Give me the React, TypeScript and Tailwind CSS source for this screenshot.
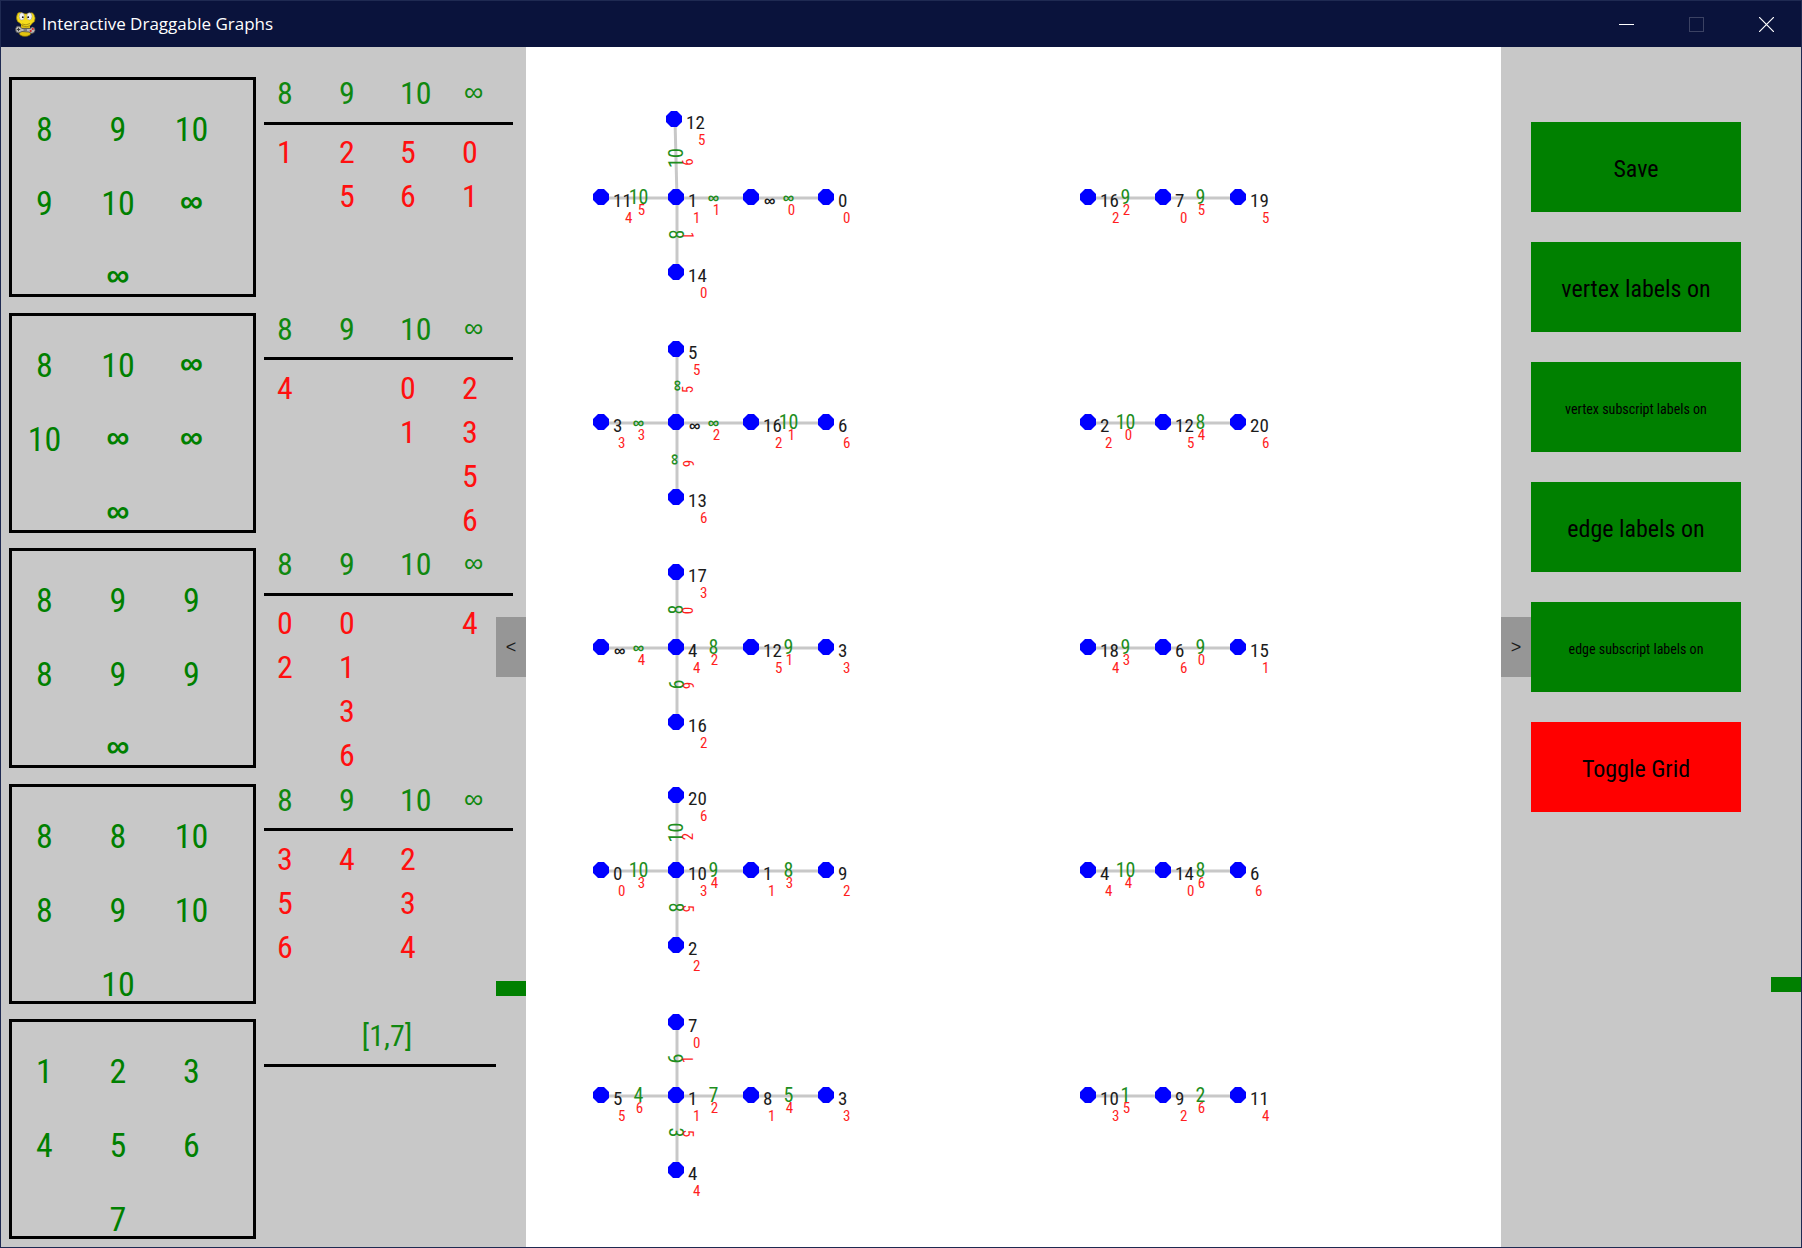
import { Fragment } from "react";

const INF = "∞";

/* ---------- Title bar ---------- */

function SnakeIcon() {
  return (
    <svg width="24" height="26" viewBox="0 0 24 26" aria-hidden="true" className="shrink-0">
      <ellipse cx="11" cy="22" rx="6" ry="3.4" fill="#e3c40f" stroke="#6b5c08" strokeWidth="0.7" />
      <path d="M7 14h9v7H7z" fill="#d8bb14" />
      <path
        d="M3.500 2.500Q6 .2 8.500 2.200Q12 3.600 15.500 2.200Q18.500 .6 20 3.500Q22 7 20.500 10.500Q18 12 16.500 14.500Q12 17 8 14.500Q6.500 12 3.500 10.500Q1.500 7 3.500 2.500Z"
        fill="#f5dc1c"
        stroke="#8a7608"
        strokeWidth="0.7"
      />
      <ellipse cx="7.800" cy="5.400" rx="2.600" ry="3.600" fill="#f4f4f4" stroke="#8a8a8a" strokeWidth="0.5" />
      <ellipse cx="15.400" cy="5.400" rx="2.600" ry="3.600" fill="#f4f4f4" stroke="#8a8a8a" strokeWidth="0.5" />
      <circle cx="8.800" cy="6.200" r="0.900" fill="#111" />
      <circle cx="14.200" cy="6.200" r="0.900" fill="#111" />
      <path d="M8 13Q12 15 16 12.500" fill="none" stroke="#8a7608" strokeWidth="0.7" />
      <path
        d="M3 15.200Q6 14.500 8 17.500L16 17.500Q18.500 15 20.500 17Q22 20 19.500 22Q17 23.200 15 21L8 20.500Q4.500 23 2.200 21Q.5 17.500 3 15.200Z"
        fill="#b9b9b9"
        stroke="#4a4a4a"
        strokeWidth="0.8"
      />
      <path d="M4.500 16.800v3.400M2.800 18.500h3.400" stroke="#333" strokeWidth="0.9" />
      <circle cx="18.800" cy="18" r="1.100" fill="#d42020" />
      <circle cx="16.700" cy="20" r="1.100" fill="#d42020" />
      <path d="M9.500 19h3.500" stroke="#333" strokeWidth="0.9" />
    </svg>
  );
}

function TitleBar() {
  return (
    <header className="flex h-[46px] shrink-0 items-stretch bg-[#0a133c] text-white">
      <div className="flex flex-1 items-center gap-1 pl-[13px]">
        <SnakeIcon />
        <h1 className="font-['Open_Sans','Noto_Sans',sans-serif] text-[17px] leading-6">
          Interactive Draggable Graphs
        </h1>
      </div>
      <button type="button" aria-label="Minimize" className="flex w-[69px] items-center justify-center">
        <svg width="15" height="15" viewBox="0 0 15 15">
          <path d="M0 7.500h15" stroke="#fff" strokeWidth="1" />
        </svg>
      </button>
      <button type="button" aria-label="Maximize" disabled className="flex w-[70px] items-center justify-center">
        <svg width="15" height="15" viewBox="0 0 15 15">
          <rect x="0.5" y="0.5" width="14" height="14" fill="none" stroke="#3b4263" />
        </svg>
      </button>
      <button type="button" aria-label="Close" className="flex w-[70px] items-center justify-center">
        <svg width="15" height="15" viewBox="0 0 15 15">
          <path d="M0 0L15 15M15 0L0 15" stroke="#fff" strokeWidth="1.200" />
        </svg>
      </button>
    </header>
  );
}

/* ---------- Left panel ---------- */

type LabelSet = {
  box: string[];
  head: string[];
  rows: string[][];
};

const LABEL_SETS: LabelSet[] = [
  {
    box: ["8", "9", "10", "9", "10", INF, "", INF],
    head: ["8", "9", "10", INF],
    rows: [
      ["1", "2", "5", "0"],
      ["", "5", "6", "1"],
    ],
  },
  {
    box: ["8", "10", INF, "10", INF, INF, "", INF],
    head: ["8", "9", "10", INF],
    rows: [
      ["4", "", "0", "2"],
      ["", "", "1", "3"],
      ["", "", "", "5"],
      ["", "", "", "6"],
    ],
  },
  {
    box: ["8", "9", "9", "8", "9", "9", "", INF],
    head: ["8", "9", "10", INF],
    rows: [
      ["0", "0", "", "4"],
      ["2", "1", "", ""],
      ["", "3", "", ""],
      ["", "6", "", ""],
    ],
  },
  {
    box: ["8", "8", "10", "8", "9", "10", "", "10"],
    head: ["8", "9", "10", INF],
    rows: [
      ["3", "4", "2", ""],
      ["5", "", "3", ""],
      ["6", "", "4", ""],
    ],
  },
  { box: ["1", "2", "3", "4", "5", "6", "", "7"], head: [], rows: [] },
];

function LabelBox({ cells }: { cells: string[] }) {
  return (
    <div className="grid h-[220px] w-[247px] shrink-0 grid-cols-[65px_82px_65px] content-start gap-y-[38px] border-3 border-black pt-[31px] text-center text-[34px] leading-9 text-[#008000]">
      {cells.map((c, i) =>
        c === INF ? (
          <span key={i} className="h-9 font-['Liberation_Sans',sans-serif] text-[32px] leading-8 font-bold">
            {c}
          </span>
        ) : (
          <span key={i} className="h-9">
            {c}
          </span>
        ),
      )}
    </div>
  );
}

function DegreeTable({ head, rows }: { head: string[]; rows: string[][] }) {
  return (
    <table className="w-[249px] table-fixed border-collapse self-start text-left text-[32px]">
      <colgroup>
        <col className="w-[62px]" />
        <col className="w-[61px]" />
        <col className="w-[62px]" />
        <col className="w-[64px]" />
      </colgroup>
      <thead className="border-b-3 border-black text-[#108810]">
        <tr>
          {head.map((h) => (
            <th key={h} scope="col" className="h-[46px] py-0 pl-[13px] align-top font-normal">
              {h === INF ? (
                <span className="block pl-0.5 font-['Liberation_Sans',sans-serif] text-[27px] leading-[30px]">
                  {h}
                </span>
              ) : (
                <span className="block leading-8">{h}</span>
              )}
            </th>
          ))}
        </tr>
      </thead>
      <tbody className="text-[#ff1010]">
        {rows.map((r, i) => (
          <tr key={i} className={i === 0 ? "h-[51px] align-bottom" : "h-[44px] align-bottom"}>
            {r.map((c, j) => (
              <td key={j} className="py-0 pl-[13px] leading-[43px]">
                {c}
              </td>
            ))}
          </tr>
        ))}
      </tbody>
    </table>
  );
}

function LeftPanel() {
  return (
    <aside className="relative flex w-[525px] shrink-0 flex-col justify-between bg-[#c8c8c8] pt-[30px] pb-2 pl-2">
      {LABEL_SETS.map((s, i) => (
        <section key={i} className="flex h-[220px] gap-2">
          <LabelBox cells={s.box} />
          {s.head.length > 0 ? (
            <DegreeTable head={s.head} rows={s.rows} />
          ) : (
            <p className="h-12 w-[232px] border-b-3 border-black pl-[14px] text-center text-[30px] leading-[34px] text-[#108810]">
              [1,7]
            </p>
          )}
        </section>
      ))}
      <button
        type="button"
        aria-label="Collapse left panel"
        className="absolute top-1/2 right-0 flex h-[60px] w-[30px] -translate-y-1/2 items-center justify-center bg-[#969696] font-['Liberation_Sans',sans-serif] text-lg text-[#1c1c1c]"
      >
        &lt;
      </button>
      <span className="absolute right-0 bottom-[251px] h-[15px] w-[30px] bg-[#008000]" />
    </aside>
  );
}

/* ---------- Graph canvas ---------- */

type Vertex = { x: number; y: number; label: string; sub?: string };
type Edge = { from: number; to: number; label: string; sub: string };
type Graph = { vertices: Vertex[]; edges: Edge[] };

function cross(
  topX: number,
  top: number,
  row: number,
  bottom: number,
  v: [string, string?][],
  e: [string, string][],
): Graph {
  const at = [
    [topX, top],
    [75, row],
    [150, row],
    [225, row],
    [300, row],
    [150, bottom],
  ];
  return {
    vertices: at.map(([x, y], i) => ({ x, y, label: v[i][0], sub: v[i][1] })),
    edges: [
      { from: 0, to: 2, label: e[0][0], sub: e[0][1] },
      { from: 1, to: 2, label: e[1][0], sub: e[1][1] },
      { from: 2, to: 3, label: e[2][0], sub: e[2][1] },
      { from: 3, to: 4, label: e[3][0], sub: e[3][1] },
      { from: 2, to: 5, label: e[4][0], sub: e[4][1] },
    ],
  };
}

function path(row: number, v: [string, string][], e: [string, string][]): Graph {
  return {
    vertices: v.map(([label, sub], i) => ({ x: 562 + 75 * i, y: row, label, sub })),
    edges: e.map(([label, sub], i) => ({ from: i, to: i + 1, label, sub })),
  };
}

const GRAPHS: Graph[] = [
  cross(148, 72, 150, 225,
    [["12", "5"], ["11", "4"], ["1", "1"], [INF], ["0", "0"], ["14", "0"]],
    [["10", "6"], ["10", "5"], [INF, "1"], [INF, "0"], ["8", "1"]]),
  cross(150, 302, 375, 450,
    [["5", "5"], ["3", "3"], [INF], ["16", "2"], ["6", "6"], ["13", "6"]],
    [[INF, "5"], [INF, "3"], [INF, "2"], ["10", "1"], [INF, "6"]]),
  cross(150, 525, 600, 675,
    [["17", "3"], [INF], ["4", "4"], ["12", "5"], ["3", "3"], ["16", "2"]],
    [["8", "0"], [INF, "4"], ["8", "2"], ["9", "1"], ["9", "6"]]),
  cross(150, 748, 823, 898,
    [["20", "6"], ["0", "0"], ["10", "3"], ["1", "1"], ["9", "2"], ["2", "2"]],
    [["10", "2"], ["10", "3"], ["9", "4"], ["8", "3"], ["8", "5"]]),
  cross(150, 975, 1048, 1123,
    [["7", "0"], ["5", "5"], ["1", "1"], ["8", "1"], ["3", "3"], ["4", "4"]],
    [["6", "1"], ["4", "6"], ["7", "2"], ["5", "4"], ["3", "5"]]),
  path(150, [["16", "2"], ["7", "0"], ["19", "5"]], [["9", "2"], ["9", "5"]]),
  path(375, [["2", "2"], ["12", "5"], ["20", "6"]], [["10", "0"], ["8", "4"]]),
  path(600, [["18", "4"], ["6", "6"], ["15", "1"]], [["9", "3"], ["9", "0"]]),
  path(823, [["4", "4"], ["14", "0"], ["6", "6"]], [["10", "4"], ["8", "6"]]),
  path(1048, [["10", "3"], ["9", "2"], ["11", "4"]], [["1", "5"], ["2", "6"]]),
];

function EdgeLabel({ a, b, edge }: { a: Vertex; b: Vertex; edge: Edge }) {
  const vertical = a.y !== b.y;
  const inf = edge.label === INF;
  const wide = inf || edge.label === "10";
  const mx = vertical ? 150 : (a.x + b.x) / 2;
  const my = (a.y + b.y) / 2;
  const turn = edge.from === 0 ? -90 : 90;
  const labelAt = vertical ? `translate(${mx} ${my}) rotate(${turn})` : `translate(${mx} ${my})`;
  const subAt = vertical
    ? `translate(${mx + 12} ${my + (wide ? 4 : 1)}) rotate(${turn})`
    : `translate(${mx + (wide ? 3 : 1)} ${my + 13})`;
  return (
    <Fragment>
      <text
        transform={labelAt}
        y={inf ? 6 : 7}
        textAnchor="middle"
        className={
          inf
            ? "fill-[#1e8e1e] font-['Liberation_Sans',sans-serif] text-base font-bold"
            : "fill-[#1e8e1e] text-[20px]"
        }
      >
        {edge.label}
      </text>
      <text transform={subAt} y={5} textAnchor="middle" className="fill-[#ff1e1e] text-[15px]">
        {edge.sub}
      </text>
    </Fragment>
  );
}

function GraphDrawing({ graph }: { graph: Graph }) {
  const { vertices, edges } = graph;
  return (
    <g>
      {edges.map((e, i) => (
        <line
          key={i}
          x1={vertices[e.from].x + 1}
          y1={vertices[e.from].y + 1}
          x2={vertices[e.to].x + 1}
          y2={vertices[e.to].y + 1}
          stroke="#c8c8c8"
          strokeWidth={3}
        />
      ))}
      {edges.map((e, i) => (
        <EdgeLabel key={i} a={vertices[e.from]} b={vertices[e.to]} edge={e} />
      ))}
      {vertices.map((v, i) => (
        <g key={i} transform={`translate(${v.x} ${v.y})`}>
          <polygon points="-3,-8 3,-8 8,-3 8,3 3,8 -3,8 -8,3 -8,-3" fill="#0000ff" />
          <text
            x={v.label === INF ? 13 : 12}
            y={v.label === INF ? 9 : 10}
            className={
              v.label === INF
                ? "fill-[#1c1c1c] font-['Liberation_Sans',sans-serif] text-base font-bold"
                : "fill-[#1c1c1c] text-[19px]"
            }
          >
            {v.label}
          </text>
          {v.sub && (
            <text x={v.label.length > 1 ? 24 : 17} y={26} className="fill-[#ff1e1e] text-[15px]">
              {v.sub}
            </text>
          )}
        </g>
      ))}
    </g>
  );
}

function Canvas() {
  return (
    <main className="min-w-0 flex-1 bg-white">
      <svg className="block h-[1199px] w-full" role="img" aria-label="Labelled graphs">
        {GRAPHS.map((g, i) => (
          <GraphDrawing key={i} graph={g} />
        ))}
      </svg>
    </main>
  );
}

/* ---------- Right panel ---------- */

function ActionButton({ label, small, off }: { label: string; small?: boolean; off?: boolean }) {
  return (
    <button
      type="button"
      className={`h-[90px] w-[210px] pt-1 text-center text-black ${off ? "bg-[#ff0000]" : "bg-[#008000]"} ${
        small ? "text-[14px]" : "text-[24px]"
      }`}
    >
      {label}
    </button>
  );
}

function RightPanel() {
  return (
    <aside className="relative flex w-[300px] shrink-0 flex-col gap-[30px] bg-[#c8c8c8] pt-[75px] pl-[30px]">
      <ActionButton label="Save" />
      <ActionButton label="vertex labels on" />
      <ActionButton label="vertex subscript labels on" small />
      <ActionButton label="edge labels on" />
      <ActionButton label="edge subscript labels on" small />
      <ActionButton label="Toggle Grid" off />
      <button
        type="button"
        aria-label="Collapse right panel"
        className="absolute top-1/2 left-0 flex h-[60px] w-[30px] -translate-y-1/2 items-center justify-center bg-[#969696] font-['Liberation_Sans',sans-serif] text-lg text-[#1c1c1c]"
      >
        &gt;
      </button>
      <span className="absolute right-0 bottom-[255px] h-[15px] w-[30px] bg-[#008000]" />
    </aside>
  );
}

export default function App() {
  return (
    <div className="flex min-h-screen flex-col border border-[#1f2a52] bg-[#c8c8c8] font-['Roboto_Condensed','Liberation_Sans',sans-serif]">
      <TitleBar />
      <div className="flex flex-1">
        <LeftPanel />
        <Canvas />
        <RightPanel />
      </div>
    </div>
  );
}
